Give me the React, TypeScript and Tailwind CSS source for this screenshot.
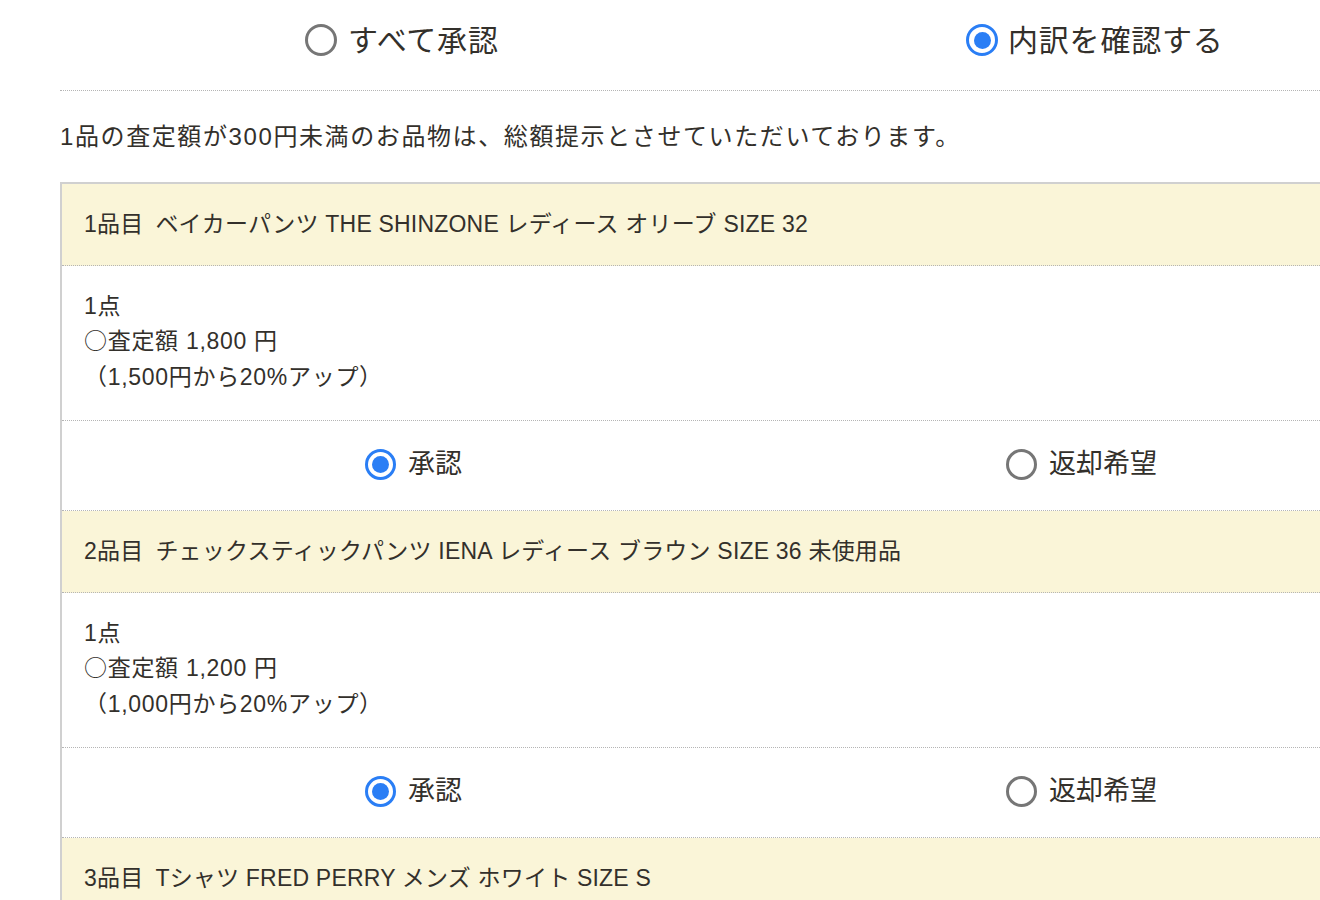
import React from "react";

const items = [
  {
    no: "1品目",
    name: "ベイカーパンツ THE SHINZONE レディース オリーブ SIZE 32",
    price: "1,800",
    base: "1,500",
  },
  {
    no: "2品目",
    name: "チェックスティックパンツ IENA レディース ブラウン SIZE 36 未使用品",
    price: "1,200",
    base: "1,000",
  },
  {
    no: "3品目",
    name: "Tシャツ FRED PERRY メンズ ホワイト SIZE S",
    price: "800",
    base: "700",
  },
];

function Radio({ checked, size }: { checked: boolean; size: "lg" | "md" }) {
  const box = size === "lg" ? "w-[32px] h-[32px]" : "w-[31px] h-[31px]";
  if (checked) {
    return (
      <span
        className={`${box} shrink-0 rounded-full border-[3px] border-[#2a7ef5] bg-white flex items-center justify-center`}
      >
        <span className="w-[17px] h-[17px] rounded-full bg-[#2a7ef5]" />
      </span>
    );
  }
  return <span className={`${box} shrink-0 rounded-full border-[3px] border-[#767676] bg-white`} />;
}

function Item({ item }: { item: (typeof items)[number] }) {
  return (
    <div>
      <div className="h-[82px] bg-[#faf5d8] border-b border-dotted border-[#b5b5b5] flex items-center pl-[22px] pb-[1px] text-[23px] tracking-[0.2px] whitespace-nowrap">
        <span>{item.no}</span>
        <span className="ml-[12px]">{item.name}</span>
      </div>
      <div className="h-[155px] border-b border-dotted border-[#b5b5b5] pl-[22px] pt-[22px] text-[23px] leading-[36px] tracking-[0.7px]">
        <p className="h-[35px]">1点</p>
        <p className="h-[36px]">
          <span className="font-['Noto_Sans_CJK_JP',sans-serif] leading-[20px]">○</span>査定額 {item.price} 円
        </p>
        <p>（{item.base}円から20%アップ）</p>
      </div>
      <div className="h-[90px] border-b border-dotted border-[#b5b5b5] flex items-center pb-[3px] text-[27px]">
        <label className="flex items-center gap-[12px] ml-[303px] w-[641px]">
          <Radio checked size="md" />
          <span>承認</span>
        </label>
        <label className="flex items-center gap-[12px]">
          <Radio checked={false} size="md" />
          <span>返却希望</span>
        </label>
      </div>
    </div>
  );
}

export default function App() {
  return (
    <div className="w-[1320px] h-[900px] overflow-hidden bg-white text-[#33302b] font-['Liberation_Sans','Noto_Sans_CJK_JP',sans-serif]">
      <div className="ml-[60px] w-[1400px]">
        <div className="h-[91px] border-b border-dotted border-[#b5b5b5] flex items-center text-[30px] tracking-[0.8px] pb-[10px]">
          <label className="flex items-center gap-[11px] ml-[245px] w-[661px]">
            <Radio checked={false} size="lg" />
            <span>すべて承認</span>
          </label>
          <label className="flex items-center gap-[10px]">
            <Radio checked size="lg" />
            <span>内訳を確認する</span>
          </label>
        </div>
        <p className="pt-[28px] h-[91px] text-[24px] tracking-[1.6px]">
          1品の査定額が300円未満のお品物は、総額提示とさせていただいております。
        </p>
        <div className="border-t-2 border-l-2 border-[#d0d0d0]">
          {items.map((it) => (
            <Item key={it.no} item={it} />
          ))}
        </div>
      </div>
    </div>
  );
}
